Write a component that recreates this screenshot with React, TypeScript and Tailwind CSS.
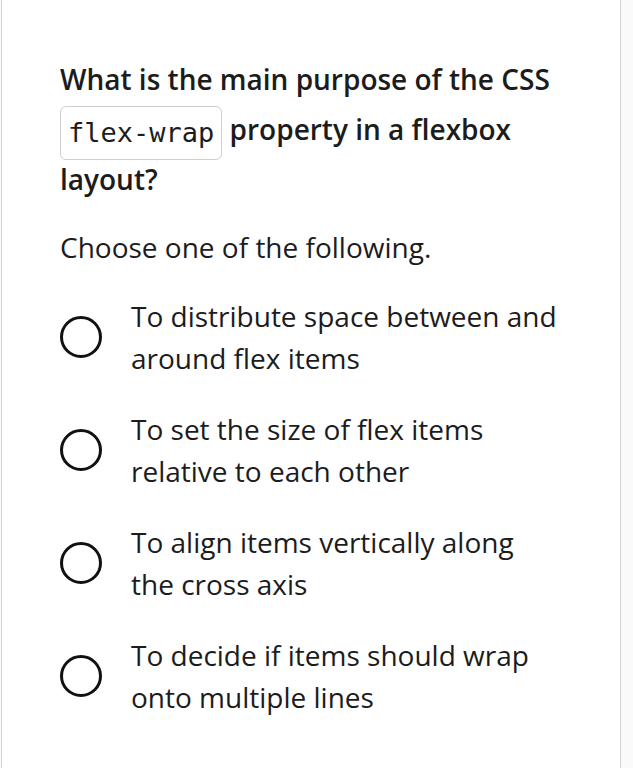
import React from "react";

const options = [
  ["To distribute space between and", "around flex items"],
  ["To set the size of flex items", "relative to each other"],
  ["To align items vertically along", "the cross axis"],
  ["To decide if items should wrap", "onto multiple lines"],
];

export default function App() {
  return (
    <div className="min-h-screen bg-[#fafafa] pl-px" style={{ fontFamily: '"Open Sans", sans-serif' }}>
      <div className="min-h-screen w-[620px] bg-white border-x border-[#d4d4d4] pl-[58px] pr-[50px] pt-[54px] text-[#1c1c1c]">
        <div className="text-[28px] font-semibold leading-[50px]">
          What is the main purpose of the CSS{" "}
          <span
            className="inline-block h-[54px] -my-[8px] align-middle rounded-[6px] border border-[#cfcfcf] px-[7px] leading-[52px] font-normal text-[27px]"
            style={{ fontFamily: '"DejaVu Sans Mono", monospace' }}
          >
            flex-wrap
          </span>{" "}
          property in a flexbox layout?
        </div>
        <div className="mt-[22px] text-[28px] leading-[42px]">Choose one of the following.</div>
        <div className="mt-[27px] flex flex-col gap-[29px]">
          {options.map((o, i) => (
            <div key={i} className="flex items-center gap-[29px]">
              <div className="w-[42px] h-[42px] shrink-0 rounded-full border-[3px] border-[#111]" />
              <div className="text-[28px] leading-[42px]">
                <div>{o[0]}</div>
                <div>{o[1]}</div>
              </div>
            </div>
          ))}
        </div>
      </div>
    </div>
  );
}
